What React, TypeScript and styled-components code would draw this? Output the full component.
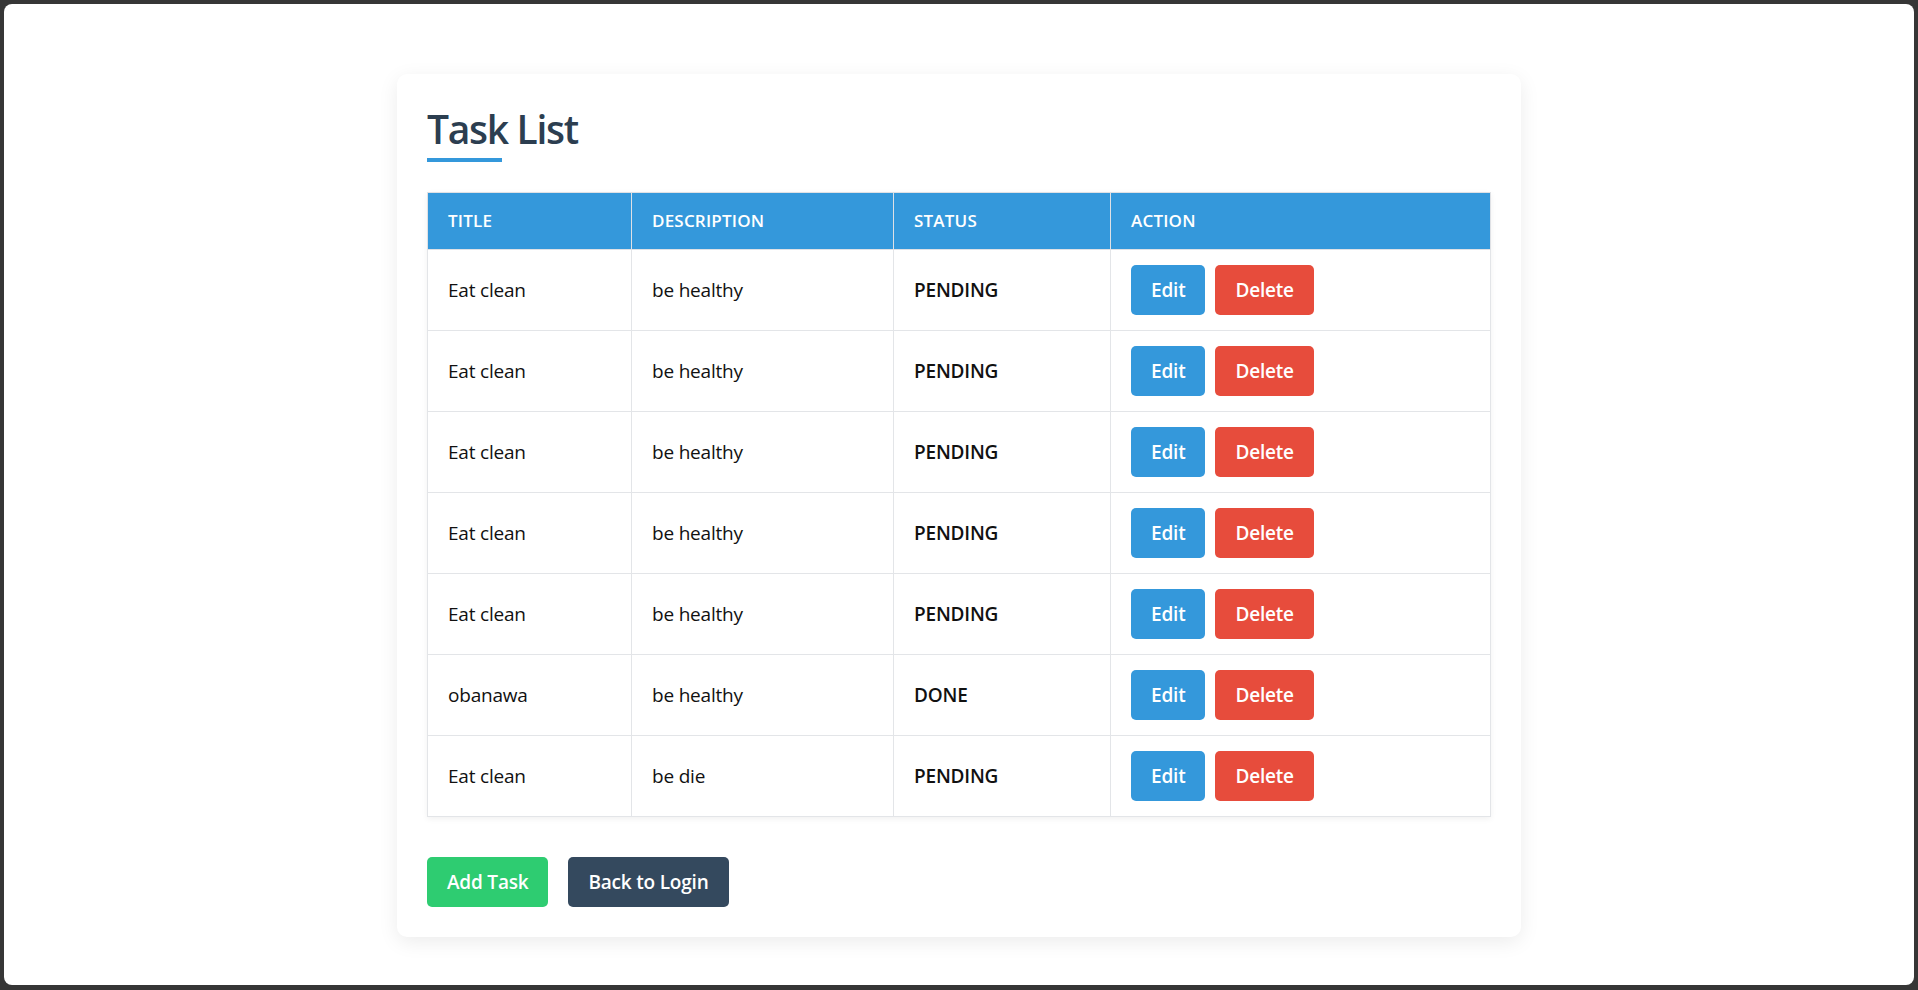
import React from "react";
import styled, { createGlobalStyle } from "styled-components";

const GlobalStyle = createGlobalStyle`
  *, *::before, *::after { box-sizing: border-box; }
  html, body {
    margin: 0;
    padding: 0;
    background: #363636;
    height: 100%;
  }
  body {
    font-family: "Open Sans", "Noto Sans", "Liberation Sans", sans-serif;
  }
`;

const Frame = styled.div`
  margin: 4px 4px 5px 4px;
  height: 981px;
  background: #ffffff;
  border-radius: 8px;
  overflow: hidden;
  display: flex;
  justify-content: center;
  align-items: flex-start;
  padding-top: 70px;
`;

const Card = styled.main`
  width: 1124px;
  background: #ffffff;
  border-radius: 10px;
  box-shadow: 0 5px 20px rgba(0, 0, 0, 0.08);
  padding: 30px;
  display: flex;
  flex-direction: column;
`;

const Title = styled.h2`
  margin: 1px 0 0;
  font-size: 39px;
  line-height: 48px;
  font-weight: 600;
  color: #2c3e50;
  letter-spacing: -1.3px;
`;

const Underline = styled.div`
  width: 75px;
  height: 4px;
  background: #3498db;
  margin-top: 5px;
  margin-bottom: 30px;
`;

const Table = styled.table`
  width: 100%;
  border-collapse: collapse;
  table-layout: fixed;
  border: 1px solid #dfe1e5;
  box-shadow: 0 2px 6px rgba(0, 0, 0, 0.06);
`;

const Th = styled.th<{ $w?: number }>`
  ${(p) => (p.$w ? `width: ${p.$w}px;` : "")}
  background: #3498db;
  color: #ffffff;
  text-align: left;
  text-transform: uppercase;
  font-size: 17px;
  font-weight: 600;
  line-height: 24px;
  padding: 16px 20px 16px;
  border: 1px solid #dfe1e5;
  letter-spacing: 0.2px;
`;

const Td = styled.td<{ $bold?: boolean }>`
  padding: 15px 20px;
  border: 1px solid #e3e5e8;
  font-size: 19px;
  line-height: 50px;
  height: 81px;
  color: #111111;
  font-weight: ${(p) => (p.$bold ? 600 : 400)};
  vertical-align: middle;
  letter-spacing: -0.2px;
`;

const ActionGroup = styled.div`
  display: flex;
  gap: 10px;
  align-items: center;
`;

const Button = styled.button<{ $bg: string }>`
  background: ${(p) => p.$bg};
  color: #ffffff;
  border: none;
  border-radius: 5px;
  font-family: "Open Sans", "Noto Sans", "Liberation Sans", sans-serif;
  font-size: 19px;
  font-weight: 600;
  line-height: 26px;
  padding: 12px 20px;
  height: 50px;
  cursor: pointer;
  letter-spacing: -0.2px;
`;

const Footer = styled.div`
  display: flex;
  gap: 20px;
  margin-top: 40px;
`;

type Task = { title: string; description: string; status: string };

const tasks: Task[] = [
  { title: "Eat clean", description: "be healthy", status: "PENDING" },
  { title: "Eat clean", description: "be healthy", status: "PENDING" },
  { title: "Eat clean", description: "be healthy", status: "PENDING" },
  { title: "Eat clean", description: "be healthy", status: "PENDING" },
  { title: "Eat clean", description: "be healthy", status: "PENDING" },
  { title: "obanawa", description: "be healthy", status: "DONE" },
  { title: "Eat clean", description: "be die", status: "PENDING" },
];

export default function App() {
  return (
    <>
      <GlobalStyle />
      <Frame>
        <Card>
          <Title>Task List</Title>
          <Underline />
          <Table>
            <thead>
              <tr>
                <Th $w={204}>Title</Th>
                <Th $w={262}>Description</Th>
                <Th $w={217}>Status</Th>
                <Th>Action</Th>
              </tr>
            </thead>
            <tbody>
              {tasks.map((t, i) => (
                <tr key={i}>
                  <Td>{t.title}</Td>
                  <Td>{t.description}</Td>
                  <Td $bold>{t.status}</Td>
                  <Td>
                    <ActionGroup>
                      <Button $bg="#3498db">Edit</Button>
                      <Button $bg="#e74c3c">Delete</Button>
                    </ActionGroup>
                  </Td>
                </tr>
              ))}
            </tbody>
          </Table>
          <Footer>
            <Button $bg="#2ecc71">Add Task</Button>
            <Button $bg="#34495e">Back to Login</Button>
          </Footer>
        </Card>
      </Frame>
    </>
  );
}
